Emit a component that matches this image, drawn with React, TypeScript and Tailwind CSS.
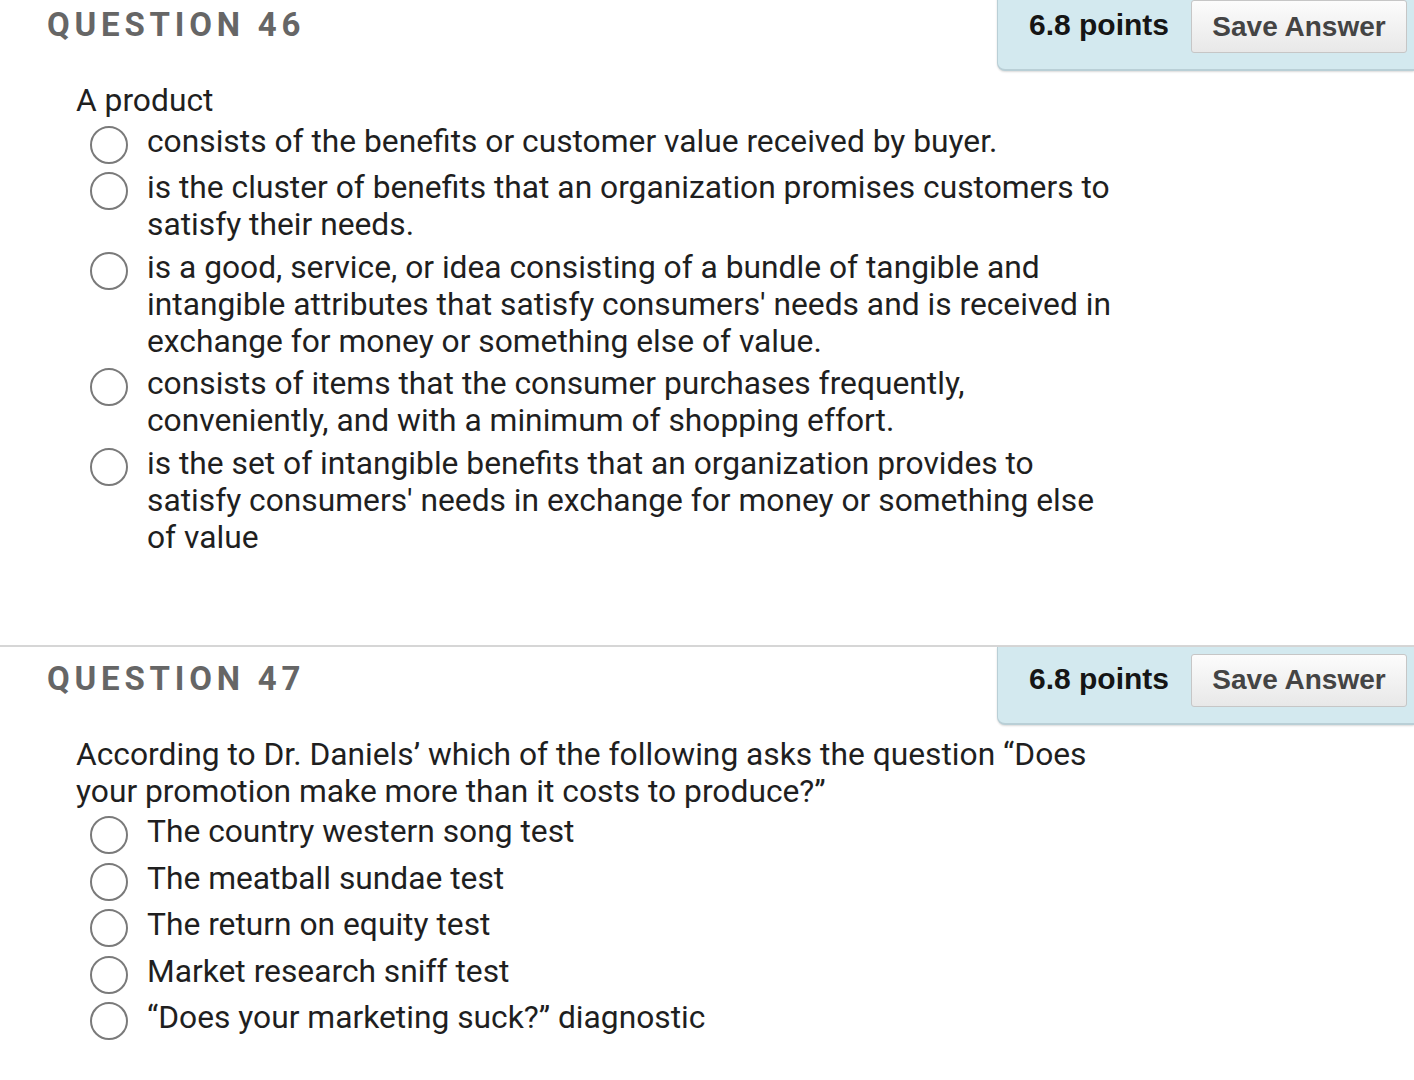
import React from 'react';

type Question = {
  number: number;
  points: string;
  prompt: string;
  options: string[];
};

const QUESTIONS: Question[] = [
  {
    number: 46,
    points: '6.8 points',
    prompt: 'A product',
    options: [
      'consists of the benefits or customer value received by buyer.',
      'is the cluster of benefits that an organization promises customers to satisfy their needs.',
      "is a good, service, or idea consisting of a bundle of tangible and intangible attributes that satisfy consumers' needs and is received in exchange for money or something else of value.",
      'consists of items that the consumer purchases frequently, conveniently, and with a minimum of shopping effort.',
      "is the set of intangible benefits that an organization provides to satisfy consumers' needs in exchange for money or something else of value",
    ],
  },
  {
    number: 47,
    points: '6.8 points',
    prompt: 'According to Dr. Daniels\u2019 which of the following asks the question \u201cDoes your promotion make more than it costs to produce?\u201d',
    options: [
      'The country western song test',
      'The meatball sundae test',
      'The return on equity test',
      'Market research sniff test',
      '\u201cDoes your marketing suck?\u201d diagnostic',
    ],
  },
];

const Radio: React.FC = () => (
  <span className="mt-[3px] block h-[38px] w-[38px] shrink-0 rounded-full border-[2.5px] border-[#7a7a7a] bg-white" />
);

const QuestionBlock: React.FC<{ q: Question; first: boolean }> = ({ q, first }) => (
  <section className={first ? '' : 'border-t-2 border-[#d6d6d6]'}>
    <div className="flex items-start justify-between">
      <h2 className="pl-[47px] pt-[12px] text-[33px] font-bold leading-[40px] tracking-[0.145em] text-[#666666] font-['Roboto',sans-serif]">
        QUESTION {q.number}
      </h2>
      <div className="flex h-[78px] w-[417px] items-start rounded-bl-[8px] border-b-2 border-l border-[#b9cfd6] bg-[#d3e9ef] pl-[31px] pr-[7px] pt-[7px] shadow-[0_1px_2px_rgba(0,0,0,0.15)]">
        <span className="pt-[5px] text-[30px] font-bold leading-[40px] text-[#151515] font-['Liberation_Sans',Arial,sans-serif]">
          {q.points}
        </span>
        <button className="ml-auto h-[53px] w-[216px] rounded-[3px] border border-[#c6c6c6] bg-gradient-to-b from-[#fcfcfc] to-[#e8e8e8] text-[28px] font-bold text-[#444444] font-['Liberation_Sans',Arial,sans-serif]">
          Save Answer
        </button>
      </div>
    </div>
    <div className="pl-[76px] pt-[11px] pb-[87px] font-['Roboto',sans-serif] text-[31.75px] leading-[37px] text-[#1f1f1f]">
      <p className="w-[1040px]">{q.prompt}</p>
      <ul className="pl-[14px]">
        {q.options.map((opt) => (
          <li key={opt} className="flex items-start gap-[19px] pt-[3.5px] pb-[2px]">
            <Radio />
            <span className="w-[975px]">{opt}</span>
          </li>
        ))}
      </ul>
    </div>
  </section>
);

export default function App() {
  return (
    <div className="min-h-[1080px] w-[1414px] overflow-hidden bg-white">
      <div className="-mt-[7px]">
        {QUESTIONS.map((q, i) => (
          <QuestionBlock key={q.number} q={q} first={i === 0} />
        ))}
      </div>
    </div>
  );
}
